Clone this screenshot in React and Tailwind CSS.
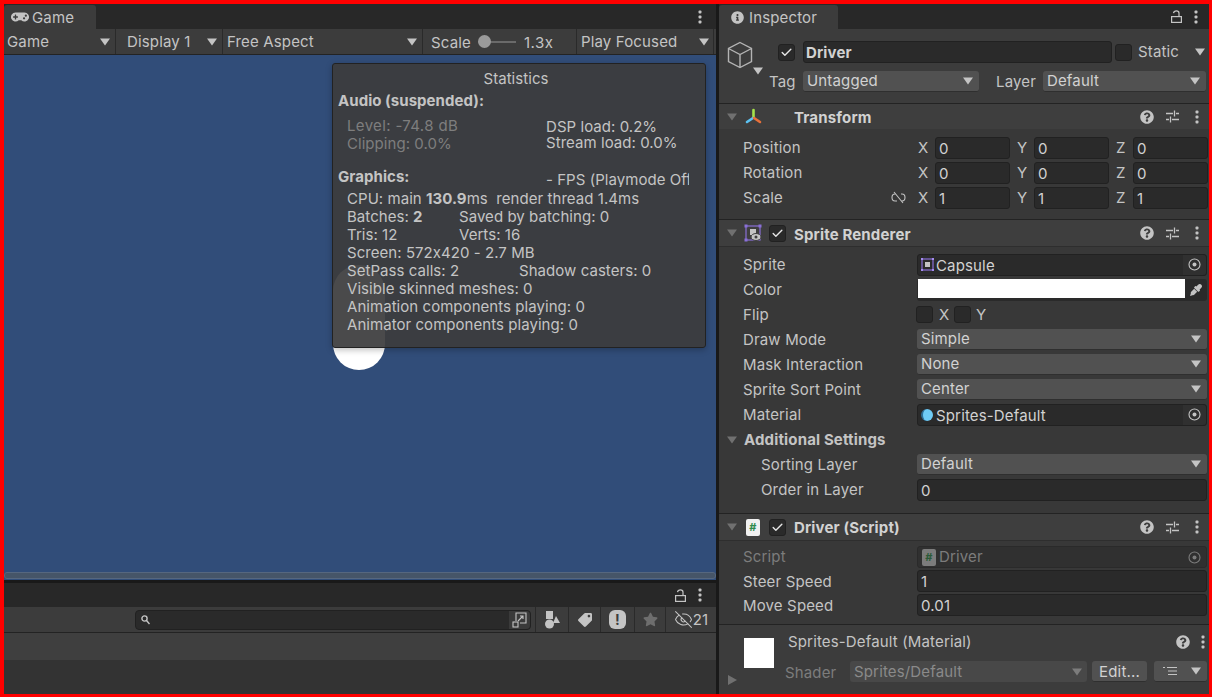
import React from 'react';
import { FaGamepad, FaInfoCircle, FaQuestionCircle, FaStar, FaTag, FaEyeDropper } from 'react-icons/fa';
import { EyeOff, Check } from 'lucide-react';

const Tri = ({ className = 'text-[#c4c4c4]', right = false }) => (
  <svg width="14" height="10" viewBox="0 0 14 10" className={`shrink-0 ${className}`}>
    {right ? <path d="M3 0 L12 5 L3 10 Z" fill="currentColor" /> : <path d="M2 1.5 H12 L7 8.5 Z" fill="currentColor" />}
  </svg>
);

const Kebab = () => (
  <svg width="4" height="14" viewBox="0 0 4 14" className="shrink-0 text-[#c4c4c4]">
    <rect x="0.5" y="0.5" width="3" height="3" rx="1" fill="currentColor" />
    <rect x="0.5" y="5.5" width="3" height="3" rx="1" fill="currentColor" />
    <rect x="0.5" y="10.5" width="3" height="3" rx="1" fill="currentColor" />
  </svg>
);

const Lock = () => (
  <svg width="11" height="13" viewBox="0 0 11 13" fill="none" stroke="#c4c4c4" strokeWidth="1.2" className="shrink-0">
    <rect x="0.6" y="6.6" width="9.8" height="5.8" />
    <path d="M2.5 3.2 C3 0.2 8 0.2 8 3.2 V6.5" />
  </svg>
);

const Sliders = () => (
  <svg width="13" height="13" viewBox="0 0 13 13" stroke="#c4c4c4" strokeWidth="1.3" className="shrink-0">
    <path d="M0 3.5 H7 M10 3.5 H13 M8.5 0.5 V6.5 M0 9.5 H3 M6 9.5 H13 M4.5 6.5 V12.5" />
  </svg>
);

const HeaderTools = () => (
  <div className="ml-auto flex items-center pr-[10px]">
    <FaQuestionCircle size={14} className="text-[#c4c4c4]" />
    <div className="ml-[12px] mr-[16px]"><Sliders /></div>
    <Kebab />
  </div>
);

const Target = () => (
  <div className="flex h-full w-[23px] shrink-0 items-center justify-center bg-[#303030] rounded-r-[3px]">
    <svg width="13" height="13" viewBox="0 0 13 13" fill="none">
      <circle cx="6.5" cy="6.5" r="5.5" stroke="#c4c4c4" strokeWidth="1.1" />
      <circle cx="6.5" cy="6.5" r="2" fill="#c4c4c4" />
    </svg>
  </div>
);

const CheckBox = ({ checked }) => (
  <div className="flex h-[17px] w-[17px] shrink-0 items-center justify-center rounded-[3px] border border-[#212121] bg-[#2a2a2a]">
    {checked && <Check size={13} strokeWidth={2.6} className="text-[#e6e6e6]" />}
  </div>
);

const Dropdown = ({ value, className = '' }) => (
  <div className={`flex h-[21px] items-center justify-between rounded-[3px] border-b border-[#2f2f2f] bg-[#515151] pl-[4px] pr-[4px] text-[#d2d2d2] ${className}`}>
    <span className="-mt-[2px]">{value}</span>
    <Tri />
  </div>
);

const Field = ({ value, className = '' }) => (
  <div className={`flex h-[22px] items-center rounded-[3px] border border-[#212121] bg-[#2a2a2a] pl-[3px] text-[#d2d2d2] ${className}`}>
    <div className="flex h-full w-full items-center gap-[inherit]">{value}</div>
  </div>
);

const Row = ({ label, indent = false, dim = false, h = 'h-[25px]', children }) => (
  <div className={`flex items-center ${h}`}>
    <span className={`shrink-0 ${indent ? 'w-[156px] pl-[18px]' : 'w-[174px]'} ${dim ? '-mt-[1px] text-[#7c7c7c]' : ''}`}>{label}</span>
    <div className={`flex min-w-0 flex-1 items-center ${indent ? 'ml-[18px]' : ''}`}>{children}</div>
  </div>
);

const FieldNum = ({ value, className = '' }) => (
  <Field className={className} value={<span className="mt-[2px]">{value}</span>} />
);

const Vec = ({ label, x, y, z, link }) => (
  <div className="relative flex h-[25px] items-center">
    <span className="w-[175px] shrink-0">{label}</span>
    {link && (
      <svg width="15" height="13" viewBox="0 0 15 13" fill="none" stroke="#c4c4c4" strokeWidth="1.1" className="absolute left-[148px] top-[6px]">
        <path d="M5 3 H4 C0 3 0 10 4 10 H6 M10 3 H11 C15 3 15 10 11 10 H10 M3 1 L12 12" />
      </svg>
    )}
    {[['X', x], ['Y', y], ['Z', z]].map(([k, v]) => (
      <div key={k} className="mr-[7px] flex w-[92px] items-center">
        <span className="w-[17px] shrink-0">{k}</span>
        <FieldNum value={v} className="w-[75px]" />
      </div>
    ))}
  </div>
);

const CompHeader = ({ icon, title, checked, h = 'h-[26px]', titleClass = '' }) => (
  <div className={`flex items-center bg-[#3e3e3e] pl-[6px] ${h}`}>
    <Tri className="text-[#707070]" />
    <div className="ml-[3px] flex h-[18px] w-[22px] items-center justify-center">{icon}</div>
    {checked ? <div className="ml-[5px]"><CheckBox checked /></div> : <div className="w-[22px]" />}
    <span className={`ml-[8px] font-bold text-[#d2d2d2] ${titleClass}`}>{title}</span>
    <HeaderTools />
  </div>
);

const TransformIcon = () => (
  <svg width="17" height="17" viewBox="0 0 17 17" strokeWidth="2.6" strokeLinecap="round" fill="none">
    <path d="M8.5 9 V2" stroke="#a6e34a" />
    <path d="M8 10 L2 14" stroke="#5cc2f2" />
    <path d="M9 10 L15 14" stroke="#e8703a" />
  </svg>
);

const SpriteRendererIcon = () => (
  <svg width="18" height="18" viewBox="0 0 18 18" fill="none">
    <rect x="2" y="2" width="14" height="14" stroke="#8a70d8" strokeWidth="1.2" />
    <rect x="0.5" y="0.5" width="3" height="3" fill="#8a70d8" />
    <rect x="14.5" y="0.5" width="3" height="3" fill="#8a70d8" />
    <rect x="0.5" y="14.5" width="3" height="3" fill="#8a70d8" />
    <rect x="6" y="5" width="6" height="6" fill="#c4c4c4" />
    <ellipse cx="12" cy="13" rx="5" ry="3.5" fill="#c4c4c4" stroke="#3e3e3e" />
    <circle cx="12" cy="13" r="1.5" fill="#3e3e3e" />
  </svg>
);

const ScriptIcon = ({ dim }) => (
  <div className={`flex h-[17px] w-[14px] items-center justify-center rounded-[2px] text-[11px] font-bold leading-none ${dim ? 'bg-[#7c7c7c] text-[#2b5a38]' : 'bg-[#f0f0f0] text-[#2f8a4c]'}`}>#</div>
);

const SpriteIcon = () => (
  <svg width="13" height="13" viewBox="0 0 13 13" fill="none" className="shrink-0">
    <rect x="1" y="1" width="11" height="11" stroke="#8a70d8" strokeWidth="1.2" />
    <rect x="4" y="4" width="5" height="5" fill="#c4c4c4" />
    <rect x="0" y="0" width="2" height="2" fill="#a48cf0" />
    <rect x="11" y="0" width="2" height="2" fill="#a48cf0" />
    <rect x="0" y="11" width="2" height="2" fill="#a48cf0" />
    <rect x="11" y="11" width="2" height="2" fill="#a48cf0" />
  </svg>
);

const StatLine = ({ children }) => (
  <div className="flex h-[18px] items-center whitespace-pre pl-[9px]">{children}</div>
);

const ToolIcon = ({ children, className }) => (
  <div className={`flex h-full items-center justify-center border-l border-[#2a2a2a] ${className}`}>{children}</div>
);

const App = () => {
  return (
    <div className="flex h-[697px] w-[1212px] overflow-hidden border-[#ff0000] border-t-[4px] border-r-[3px] border-b-[3px] border-l-[4px] bg-[#191919] text-[15px] leading-none tracking-[0.15px] text-[#c4c4c4] [font-feature-settings:'calt'_0] font-['Inter','Noto_Sans',sans-serif]">
      {/* Left column */}
      <div className="flex w-[712px] shrink-0 flex-col">
        <div className="flex h-[25px] items-stretch bg-[#282828]">
          <div className="mt-[1px] flex w-[92px] items-center gap-[3px] rounded-t-[3px] bg-[#3c3c3c] pl-[7px]">
            <FaGamepad size={18} className="text-[#c4c4c4]" />
            <span>Game</span>
          </div>
          <div className="ml-auto flex items-center pr-[14px]"><Kebab /></div>
        </div>
        <div className="flex h-[26px] items-center border-b border-[#232323] bg-[#3c3c3c]">
          <div className="flex h-full w-[111px] items-center justify-between pl-[3px] pr-[3px]"><span>Game</span><Tri /></div>
          <div className="flex h-full w-[107px] items-center justify-between border-l border-[#2a2a2a] pl-[11px] pr-[3px]"><span>Display 1</span><Tri /></div>
          <div className="flex h-full w-[200px] items-center justify-between border-l border-[#2a2a2a] pl-[4px] pr-[3px]"><span>Free Aspect</span><Tri /></div>
          <div className="flex h-full w-[154px] items-center border-l border-[#2a2a2a] pl-[8px]">
            <span className="mt-[1px]">Scale</span>
            <div className="relative ml-[7px] h-[2px] w-[38px] bg-[#6a6a6a]">
              <div className="absolute -top-[6px] left-0 h-[13px] w-[13px] rounded-full bg-[#9a9a9a]" />
            </div>
            <span className="ml-[8px] mt-[1px] tracking-[0.5px]">1.3x</span>
          </div>
          <div className="flex h-full w-[138px] items-center justify-between border-x border-[#2a2a2a] pl-[4px] pr-[2px]"><span>Play Focused</span><Tri /></div>
        </div>

        {/* Game view */}
        <div className="relative h-[525px] bg-[#314d79]">
          <div className="absolute left-[329px] top-[210px] h-[105px] w-[52px] rounded-full bg-white" />
          <div className="absolute left-[328px] top-[8px] h-[285px] w-[374px] rounded-[3px] border border-[#222222] bg-[#3c3c3d]/[.93] pl-[5px] pt-[5px] tracking-[0.05px] shadow-[0_2px_6px_rgba(0,0,0,0.25)]">
            <div className="flex h-[18px] items-center justify-center pr-[11px]">Statistics</div>
            <div className="mt-[4px] flex h-[18px] items-center font-bold">Audio (suspended):</div>
            <div className="mt-[7px] flex h-[18px] items-center pl-[9px]">
              <span className="w-[199px] tracking-[0.35px] text-[#7e7e7e]">Level: -74.8 dB</span><span className="mt-[2px]">DSP load: 0.2%</span>
            </div>
            <div className="flex h-[18px] items-center pl-[9px]">
              <span className="w-[199px] text-[#7e7e7e]">Clipping: 0.0%</span><span className="-mt-[2px]">Stream load: 0.0%</span>
            </div>
            <div className="mt-[15px] flex h-[18px] items-center">
              <span className="w-[208px] font-bold">Graphics:</span>
              <span className="mt-[6px] w-[143px] shrink-0 overflow-hidden whitespace-nowrap">- FPS (Playmode Off)</span>
            </div>
            <div className="mt-[4px]" />
            <StatLine>CPU: main <b>130.9</b>ms  render thread 1.4ms</StatLine>
            <StatLine><span className="w-[112px]">Batches: <b>2</b></span>Saved by batching: 0</StatLine>
            <StatLine><span className="w-[112px]">Tris: 12</span>Verts: 16</StatLine>
            <StatLine>Screen: 572x420 - 2.7 MB</StatLine>
            <StatLine><span className="w-[172px]">SetPass calls: 2</span>Shadow casters: 0</StatLine>
            <StatLine>Visible skinned meshes: 0</StatLine>
            <StatLine>Animation components playing: 0</StatLine>
            <StatLine>Animator components playing: 0</StatLine>
          </div>
          <div className="absolute bottom-[1px] left-0 right-0 h-[7px] rounded-[3px] border border-[#56677f] bg-[#465568]" />
        </div>

        {/* Console */}
        <div className="mt-[3px] flex h-[24px] items-center justify-end gap-[12px] bg-[#282828] pr-[14px]">
          <Lock />
          <Kebab />
        </div>
        <div className="flex h-[26px] items-center border-b border-[#232323] bg-[#3c3c3c] pl-[131px]">
          <div className="flex h-[20px] w-[396px] items-center rounded-[4px] border border-[#212121] bg-[#2a2a2a]">
            <svg width="9" height="10" viewBox="0 0 9 10" fill="none" stroke="#c4c4c4" strokeWidth="1.4" className="ml-[5px]">
              <circle cx="3.5" cy="3.5" r="2.6" />
              <path d="M5.5 5.5 L8.5 9" />
            </svg>
            <div className="ml-auto flex h-full w-[21px] items-center justify-center rounded-r-[4px] bg-[#3a3a3a]">
              <svg width="15" height="16" viewBox="0 0 15 16" fill="none" stroke="#c4c4c4" strokeWidth="1.1">
                <path d="M4 9 V1 H14 V11 H8" />
                <rect x="1" y="10" width="5" height="5" />
                <path d="M6 9 L11 4 M8 4 H11 V7" />
              </svg>
            </div>
          </div>
          <div className="ml-[4px] flex h-full flex-1 items-center">
            <ToolIcon className="w-[33px]">
              <svg width="15" height="18" viewBox="0 0 15 18" fill="#c4c4c4">
                <rect x="1" y="0" width="7" height="8" />
                <circle cx="4.5" cy="13" r="4.5" />
                <path d="M11 5 L15 12 H8 Z" />
              </svg>
            </ToolIcon>
            <ToolIcon className="w-[32px]"><FaTag size={14} className="rotate-90 text-[#c4c4c4]" /></ToolIcon>
            <ToolIcon className="w-[34px]">
              <div className="flex h-[19px] w-[17px] items-center justify-center rounded-[6px] bg-[#c4c4c4] text-[14px] font-bold text-[#3c3c3c]">!</div>
            </ToolIcon>
            <ToolIcon className="w-[31px]"><FaStar size={15} className="text-[#6e6e6e]" /></ToolIcon>
            <ToolIcon className="w-[51px]">
              <EyeOff size={19} strokeWidth={1.3} className="text-[#c4c4c4]" />
              <span>21</span>
            </ToolIcon>
          </div>
        </div>
        <div className="h-[27px] bg-[#3f3f3f]" />
        <div className="flex-1 bg-[#333333]" />
      </div>

      {/* Inspector */}
      <div className="ml-[3px] flex min-w-0 flex-1 flex-col bg-[#383838]">
        <div className="flex h-[25px] items-stretch bg-[#282828]">
          <div className="mt-[1px] flex w-[119px] items-center gap-[5px] rounded-t-[3px] bg-[#3c3c3c] pl-[12px]">
            <FaInfoCircle size={13} className="text-[#c4c4c4]" />
            <span>Inspector</span>
          </div>
          <div className="ml-auto flex items-center gap-[12px] pr-[11px]"><Lock /><Kebab /></div>
        </div>

        <div className="relative h-[75px] border-b border-[#232323] bg-[#3c3c3c]">
          <svg width="26" height="28" viewBox="0 0 26 28" fill="none" stroke="#b4b4b4" strokeWidth="1.4" className="absolute left-[8px] top-[12px]">
            <path d="M13 1.5 L24.5 7.5 V20.5 L13 26.5 L1.5 20.5 V7.5 Z M1.5 7.5 L13 13.5 L24.5 7.5 M13 13.5 V26.5" />
          </svg>
          <div className="absolute left-[32px] top-[37px]"><Tri /></div>
          <div className="flex h-[42px] items-center pl-[59px] pt-[4px]">
            <CheckBox checked />
            <div className="ml-[8px] flex h-[22px] w-[309px] items-center rounded-[3px] border border-[#212121] bg-[#2a2a2a] pl-[2px] font-bold text-[#d2d2d2]">Driver</div>
            <div className="ml-[3px]"><CheckBox /></div>
            <span className="ml-[6px] mt-[-1px]">Static</span>
            <div className="ml-auto pr-[2px]"><Tri /></div>
          </div>
          <div className="flex items-center">
            <span className="ml-[50px] w-[34px]">Tag</span>
            <Dropdown value="Untagged" className="w-[176px]" />
            <span className="ml-[17px] w-[47px]">Layer</span>
            <Dropdown value="Default" className="w-[163px]" />
          </div>
        </div>

        {/* Transform */}
        <CompHeader title="Transform" icon={<TransformIcon />} h="h-[25px]" titleClass="mt-[2px]" />
        <div className="h-[91px] border-b border-[#232323] pl-[24px] pt-[6px]">
          <Vec label="Position" x="0" y="0" z="0" />
          <Vec label="Rotation" x="0" y="0" z="0" />
          <Vec label="Scale" x="1" y="1" z="1" link />
        </div>

        {/* Sprite Renderer */}
        <div className="border-b border-[#2e2e2e]">
          <CompHeader title="Sprite Renderer" checked icon={<SpriteRendererIcon />} titleClass="mt-[2px]" />
        </div>
        <div className="h-[267px] border-b border-[#232323] pl-[24px] pr-[2px] pt-[5px]">
          <Row label="Sprite">
            <Field className="w-full gap-[2px] !pr-0" value={<><SpriteIcon /><span className="mt-[1px]">Capsule</span><div className="ml-auto h-full"><Target /></div></>} />
          </Row>
          <Row label="Color">
            <div className="flex h-[22px] w-full items-center rounded-[3px] bg-[#2a2a2a]">
              <div className="ml-px h-[19px] w-[267px] self-start bg-white" />
              <div className="flex flex-1 items-center justify-center"><FaEyeDropper size={12} className="text-[#c4c4c4]" /></div>
            </div>
          </Row>
          <Row label="Flip">
            <div className="-ml-px flex items-center"><CheckBox /><span className="ml-[6px] w-[15px]">X</span><CheckBox /><span className="ml-[5px]">Y</span></div>
          </Row>
          <Row label="Draw Mode"><Dropdown value="Simple" className="w-full" /></Row>
          <Row label="Mask Interaction"><Dropdown value="None" className="w-full" /></Row>
          <Row label="Sprite Sort Point"><Dropdown value="Center" className="w-full" /></Row>
          <Row label="Material">
            <Field className="w-full gap-[3px] !pr-0" value={<><span className="h-[12px] w-[12px] shrink-0 rounded-full border-l-2 border-[#2e6e96] bg-[#6fcbf5]" /><span className="mt-[1px]">Sprites-Default</span><div className="ml-auto h-full"><Target /></div></>} />
          </Row>
          <div className="-ml-[18px] flex h-[25px] items-center gap-[5px] font-bold">
            <Tri className="text-[#707070]" /><span>Additional Settings</span>
          </div>
          <Row label="Sorting Layer" indent><Dropdown value="Default" className="w-full" /></Row>
          <Row label="Order in Layer" indent><FieldNum value="0" className="w-full" /></Row>
        </div>

        {/* Driver script */}
        <div className="border-b border-[#2e2e2e]">
          <CompHeader title="Driver (Script)" checked icon={<ScriptIcon />} />
        </div>
        <div className="h-[84px] border-b border-[#232323] pl-[24px] pr-[2px] pt-[4px]">
          <Row label="Script" dim h="h-[24px]">
            <div className="flex h-[22px] w-full items-center gap-[3px] rounded-[3px] border border-[#2a2a2a] bg-[#303030] pl-[4px] text-[#7c7c7c]">
              <ScriptIcon dim /><span className="-mt-[2px]">Driver</span>
              <svg width="13" height="13" viewBox="0 0 13 13" fill="none" className="ml-auto mr-[5px]">
                <circle cx="6.5" cy="6.5" r="5.5" stroke="#7c7c7c" strokeWidth="1.1" />
                <circle cx="6.5" cy="6.5" r="2" fill="#7c7c7c" />
              </svg>
            </div>
          </Row>
          <Row label="Steer Speed" h="h-[24px]"><Field value="1" className="w-full" /></Row>
          <Row label="Move Speed" h="h-[24px]"><Field value="0.01" className="w-full" /></Row>
        </div>

        {/* Material */}
        <div className="relative flex-1 bg-[#3c3c3c]">
          <div className="absolute left-[25px] top-[13px] h-[30px] w-[30px] bg-white" />
          <div className="absolute bottom-[9px] left-[6px]"><Tri right className="text-[#707070]" /></div>
          <div className="mb-[2px] flex h-[34px] items-center pl-[69px] pr-[4px]">
            <span className="-mt-[1px]">Sprites-Default (Material)</span>
            <div className="ml-auto flex items-center gap-[11px]">
              <FaQuestionCircle size={14} className="text-[#c4c4c4]" />
              <Kebab />
            </div>
          </div>
          <div className="flex items-center pl-[66px]">
            <span className="mt-[1px] w-[65px] text-[#7c7c7c]">Shader</span>
            <div className="flex h-[21px] w-[237px] items-center justify-between rounded-[3px] bg-[#484848] pl-[4px] pr-[3px] text-[#8a8a8a]">
              <span className="-mt-[1px]">Sprites/Default</span>
              <Tri className="text-[#7c7c7c]" />
            </div>
            <div className="ml-[5px] flex h-[21px] w-[55px] items-center justify-center rounded-[3px] border-b border-[#2f2f2f] bg-[#515151] text-[#d2d2d2]">Edit...</div>
            <div className="ml-[7px] flex h-[21px] w-[53px] items-center justify-between rounded-[3px] border-b border-[#2f2f2f] bg-[#515151] pl-[9px] pr-[4px]">
              <svg width="14" height="10" viewBox="0 0 14 10" stroke="#c4c4c4" strokeWidth="1.2">
                <path d="M4 1.5 H14 M5 5 H14 M5 8.5 H14 M0 1.5 H2" />
              </svg>
              <Tri />
            </div>
          </div>
        </div>
      </div>
    </div>
  );
};

export default App;
